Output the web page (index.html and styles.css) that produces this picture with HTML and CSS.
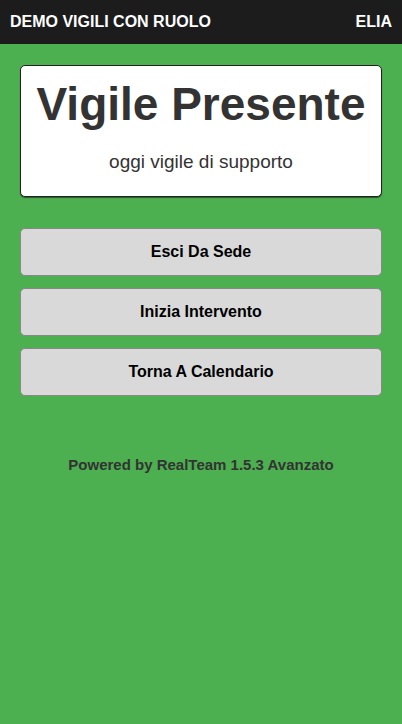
FILE: index.html
```html
<!DOCTYPE html>
<html>
<head>
<meta charset="utf-8">
<link rel="stylesheet" href="styles.css">
</head>
<body>
<header class="topbar">
  <span class="app-title">DEMO VIGILI CON RUOLO</span>
  <span class="user">ELIA</span>
</header>
<main class="content">
  <section class="status-card">
    <h1 class="status-title">Vigile Presente</h1>
    <p class="status-sub">oggi vigile di supporto</p>
  </section>
  <div class="actions">
    <button class="action-btn">Esci Da Sede</button>
    <button class="action-btn">Inizia Intervento</button>
    <button class="action-btn">Torna A Calendario</button>
  </div>
  <p class="footer">Powered by RealTeam 1.5.3 Avanzato</p>
</main>
</body>
</html>
```
FILE: styles.css
```css
html, body {
  margin: 0;
  padding: 0;
  height: 100%;
}
body {
  background: #4caf50;
  font-family: "Liberation Sans", Arial, sans-serif;
  color: #333;
}
.topbar {
  height: 44px;
  background: #1c1c1c;
  color: #fff;
  display: flex;
  align-items: center;
  justify-content: space-between;
  padding: 0 10px;
  font-weight: bold;
  font-size: 16px;
  box-sizing: border-box;
}
.content {
  padding: 21px 20px 0;
}
.status-card {
  background: #fff;
  border: 1px solid #222;
  border-radius: 5px;
  box-shadow: 0 1px 1px rgba(0,0,0,0.5);
  height: 132px;
  box-sizing: border-box;
  text-align: center;
  padding-top: 12px;
}
.status-title {
  margin: 0;
  font-size: 46px;
  font-weight: bold;
  line-height: 52px;
  color: #333;
}
.status-sub {
  margin: 21px 0 0;
  font-size: 19px;
  line-height: 22px;
  color: #333;
}
.actions {
  margin-top: 31px;
  display: flex;
  flex-direction: column;
  gap: 12px;
}
.action-btn {
  height: 48px;
  background: #d9d9d9;
  border: 1px solid #888;
  border-radius: 5px;
  font-family: "Liberation Sans", Arial, sans-serif;
  font-weight: bold;
  font-size: 16px;
  color: #000;
  padding: 0;
}
.footer {
  margin: 60px 0 0;
  text-align: center;
  font-weight: bold;
  font-size: 15px;
  color: #333;
}
```
